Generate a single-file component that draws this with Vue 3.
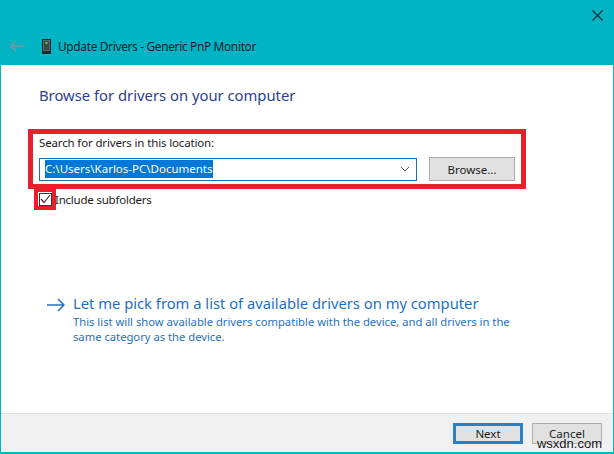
<script setup>
const path = 'C:\\Users\\Karlos-PC\\Documents'
</script>

<template>
  <div class="window">
    <div class="titlebar">
      <div class="close-row">
        <svg width="11" height="11" viewBox="0 0 11 11">
          <path d="M0.5 0.5L10.5 10.5M10.5 0.5L0.5 10.5" stroke="#0c2c38" stroke-width="1.2" fill="none" />
        </svg>
      </div>
      <div class="title-row">
        <svg class="back" width="15" height="12" viewBox="0 0 15 12">
          <path d="M15 6H2M7 1L2 6L7 11" stroke="#7d9898" stroke-width="1.5" fill="none" />
        </svg>
        <svg class="monitor" width="9" height="15" viewBox="0 0 9 15">
          <rect x="0.5" y="0.5" width="8" height="12" fill="#5a6a68" stroke="#20282a" />
          <rect x="2" y="2" width="5" height="9" fill="#3a4644" />
          <rect x="3.5" y="3" width="2" height="2" fill="#5fd068" />
          <path d="M0 14H9" stroke="#20282a" stroke-width="2" fill="none" />
        </svg>
        <span class="title">Update Drivers - Generic PnP Monitor</span>
      </div>
    </div>

    <div class="body">
      <h1 class="heading">Browse for drivers on your computer</h1>

      <div class="search-box">
        <label class="search-label">Search for drivers in this location:</label>
        <div class="search-row">
          <div class="combo">
            <span class="combo-text">{{ path }}</span>
            <svg width="10" height="6" viewBox="0 0 10 6">
              <path d="M1 1L5 5L9 1" stroke="#555" stroke-width="1" fill="none" />
            </svg>
          </div>
          <button class="btn browse">Browse...</button>
        </div>
      </div>

      <div class="check-row">
        <div class="check-mark">
          <div class="checkbox">
            <svg width="11" height="10" viewBox="0 0 11 10">
              <path d="M1 5L4 8.5L10 1" stroke="#333" stroke-width="1.2" fill="none" />
            </svg>
          </div>
        </div>
        <span class="check-label">Include subfolders</span>
      </div>

      <div class="pick">
        <svg class="pick-arrow" width="18" height="14" viewBox="0 0 18 14">
          <path d="M0 7H17M11 1L17 7L11 13" stroke="#1f70c0" stroke-width="1.5" fill="none" />
        </svg>
        <div class="pick-text">
          <div class="pick-title">Let me pick from a list of available drivers on my computer</div>
          <div class="pick-desc">This list will show available drivers compatible with the device, and all drivers in the same category as the device.</div>
        </div>
      </div>
    </div>

    <div class="footer">
      <button class="btn next">Next</button>
      <button class="btn cancel">Cancel</button>
      <span class="watermark">wsxdn.com</span>
    </div>
  </div>
</template>

<style scoped>
.window {
  position: relative;
  width: 614px;
  height: 454px;
  box-sizing: border-box;
  padding: 0 1px 2px 1px;
  background: #00b4c4;
  display: flex;
  flex-direction: column;
  font-family: "Noto Sans", "Open Sans", sans-serif;
  font-size: 11.5px;
  color: #1a1a1a;
  overflow: hidden;
}
.titlebar {
  height: 65px;
  flex: none;
  display: flex;
  flex-direction: column;
}
.close-row {
  display: flex;
  justify-content: flex-end;
  padding: 10px 10px 0 0;
  height: 26px;
}
.title-row {
  display: flex;
  align-items: center;
  margin-top: 2px;
  padding-left: 8px;
}
.back {
  margin-right: 17px;
}
.monitor {
  margin-left: 1px;
  margin-right: 7px;
}
.title {
  font-size: 11.9px;
  letter-spacing: -0.33px;
  color: #10222e;
}
.body {
  flex: 1;
  background: #fff;
  padding: 0 0 0 27px;
  display: flex;
  flex-direction: column;
}
.heading {
  margin: 20px 0 0 11px;
  font-size: 14.8px;
  line-height: 20px;
  font-weight: 400;
  color: #2a3f8f;
}
.search-box {
  width: 498px;
  height: 60px;
  margin-top: 24px;
  box-sizing: border-box;
  border: 5px solid #e8202c;
  padding: 1px 0 0 6px;
}
.search-label {
  display: block;
  line-height: 16px;
  letter-spacing: -0.15px;
}
.search-row {
  display: flex;
  align-items: center;
  margin-top: 6px;
}
.combo {
  width: 378px;
  height: 23px;
  box-sizing: border-box;
  border: 1px solid #1f70b0;
  display: flex;
  align-items: center;
  justify-content: space-between;
  padding: 0 6px 0 5px;
}
.combo-text {
  background: #0078d7;
  color: #fff;
  line-height: 18px;
}
.btn {
  font: inherit;
  color: #1a1a1a;
  background: #e1e1e1;
  border: 1px solid #adadad;
  padding: 0;
}
.browse {
  width: 86px;
  height: 24px;
  margin-left: 12px;
}
.check-row {
  display: flex;
  align-items: center;
  margin-top: -1px;
  margin-left: 6px;
}
.check-mark {
  width: 22px;
  height: 22px;
  box-sizing: border-box;
  border: 4px solid #e8202c;
  display: flex;
  align-items: center;
  justify-content: center;
}
.checkbox {
  width: 13px;
  height: 13px;
  flex: none;
  box-sizing: border-box;
  border: 1px solid #333;
  display: flex;
  align-items: center;
  justify-content: center;
}
.check-label {
  margin-left: -1px;
  letter-spacing: -0.22px;
}
.pick {
  display: flex;
  margin-top: 83px;
  margin-left: 19px;
}
.pick-arrow {
  margin-top: 5px;
  margin-right: 8px;
}
.pick-text {
  width: 445px;
}
.pick-title {
  font-size: 14.75px;
  line-height: 20px;
  margin-bottom: 1px;
  color: #1f70c0;
}
.pick-desc {
  font-size: 11.22px;
  line-height: 15px;
  color: #1f70c0;
}
.footer {
  height: 39px;
  flex: none;
  background: #f0f0f0;
  border-top: 1px solid #dfdfdf;
  box-sizing: border-box;
  display: flex;
  align-items: center;
  justify-content: flex-end;
  gap: 9px;
  padding: 0 11px 0 0;
}
.next,
.cancel {
  width: 70px;
  height: 21px;
}
.next {
  border: 3px solid #2a80c4;
}
.watermark {
  position: absolute;
  right: 12px;
  bottom: 3px;
  font-family: "Liberation Sans", sans-serif;
  font-size: 13px;
  color: #111;
  text-shadow: 0 0 2px #fff;
}
</style>

<style>
html, body {
  margin: 0;
  background: #00b4c4;
}
</style>
